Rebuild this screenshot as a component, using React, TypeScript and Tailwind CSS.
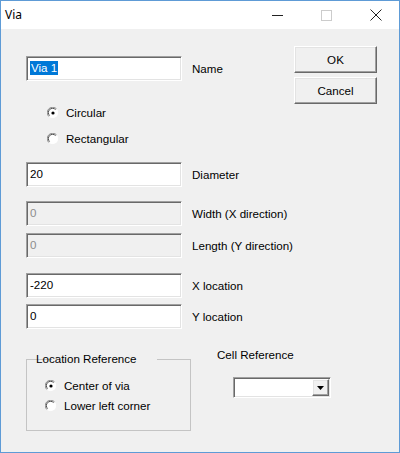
import React from 'react';

const sunken =
  'border border-t-[#a0a0a0] border-l-[#a0a0a0] border-b-white border-r-white shadow-[inset_1px_1px_0_#696969,inset_-1px_-1px_0_#e3e3e3]';
const raised =
  'border border-t-white border-l-white border-b-[#696969] border-r-[#696969] shadow-[inset_-1px_-1px_0_#a0a0a0,inset_1px_1px_0_#e3e3e3]';

const Radio: React.FC<{ checked?: boolean; label: string }> = ({ checked, label }) => (
  <div className="flex items-center gap-[7px] h-[16px]">
    <svg width="12" height="12" viewBox="0 0 12 12" className="shrink-0">
      <circle cx="6" cy="6" r="5" fill="#fff" />
      <path d="M1.8 9.5 A5 5 0 0 1 9.5 1.8" fill="none" stroke="#8a8a8a" strokeWidth="1" />
      <path d="M2.6 8.6 A4 4 0 0 1 8.6 2.6" fill="none" stroke="#505050" strokeWidth="1" />
      <path d="M9.9 2.4 A5.5 5.5 0 0 1 2.4 9.9" fill="none" stroke="#ffffff" strokeWidth="1" />
      {checked && <circle cx="6" cy="6" r="1.6" fill="#000" />}
    </svg>
    <span>{label}</span>
  </div>
);

const Field: React.FC<{ value: string; label: string; disabled?: boolean; selected?: boolean; className?: string }> = ({
  value,
  label,
  disabled,
  selected,
  className = '',
}) => (
  <div className={`flex items-center whitespace-nowrap ${className}`}>
    <div
      className={`w-[156px] h-[25px] shrink-0 flex items-start pt-[4px] pl-[3px] ${sunken} ${
        disabled ? 'bg-[#f0f0f0] text-[#8d8d8d]' : 'bg-white text-black'
      }`}
    >
      {selected ? <span className="bg-[#0078d7] text-white px-[1px]">{value}</span> : <span>{value}</span>}
    </div>
    <span className="ml-[10px]">{label}</span>
  </div>
);

export default function App() {
  return (
    <div
      className="w-[400px] h-[453px] border border-[#5e9bd6] bg-[#f0f0f0] flex flex-col text-[11.6px] leading-[14px] text-black"
      style={{ fontFamily: '"Liberation Sans", Arial, sans-serif' }}
    >
      {/* title bar */}
      <div className="h-[28px] bg-white flex items-center shrink-0">
        <span className="ml-[4px] text-[12px]" style={{ fontFamily: '"Noto Sans", sans-serif' }}>
          Via
        </span>
        <div className="ml-auto flex items-center h-full">
          <div className="w-[46px] h-full flex items-center justify-center">
            <div className="w-[11px] h-px bg-[#222]" />
          </div>
          <div className="w-[46px] h-full flex items-center justify-center ml-[3px]">
            <div className="w-[11px] h-[11px] border border-[#cccccc]" />
          </div>
          <div className="w-[46px] h-full flex items-center justify-center ml-[4px]">
            <svg width="12" height="12" viewBox="0 0 12 12">
              <path d="M0.5 0.5 L11.5 11.5 M11.5 0.5 L0.5 11.5" stroke="#222" strokeWidth="1" />
            </svg>
          </div>
        </div>
      </div>

      {/* body */}
      <div className="flex flex-1">
        <div className="flex-1 min-w-0 pl-[25px]">
          <Field value="Via 1" label="Name" selected className="mt-[27px]" />

          <div className="mt-[24px] pl-[21px] flex flex-col gap-[10px]">
            <Radio checked label="Circular" />
            <Radio label="Rectangular" />
          </div>

          <Field value="20" label="Diameter" className="mt-[15px]" />
          <Field value="0" label="Width (X direction)" disabled className="mt-[14px]" />
          <Field value="0" label="Length (Y direction)" disabled className="mt-[7px]" />
          <Field value="-220" label="X location" className="mt-[15px]" />
          <Field value="0" label="Y location" className="mt-[6px]" />

          <div className="flex items-start mt-[19px] whitespace-nowrap">
            <fieldset className="w-[165px] h-[79px] mt-[4px] border border-[#c4c4c4] pl-[18px] shrink-0">
              <legend className="ml-[7px] -translate-x-[18px] px-[2px]">Location Reference</legend>
              <div className="flex flex-col gap-[4px] mt-[12px]">
                <Radio checked label="Center of via" />
                <Radio label="Lower left corner" />
              </div>
            </fieldset>
            <div className="ml-[26px]">
              <div>Cell Reference</div>
              <div className={`ml-[16px] mt-[15px] w-[98px] h-[21px] bg-white flex justify-end ${sunken}`}>
                <div className={`w-[17px] h-[17px] mt-[1px] mr-[1px] bg-[#f0f0f0] flex items-center justify-center ${raised}`}>
                  <svg width="7" height="4" viewBox="0 0 7 4">
                    <path d="M0 0 H7 L3.5 4 Z" fill="#000" />
                  </svg>
                </div>
              </div>
            </div>
          </div>
        </div>

        <div className="w-[83px] shrink-0 mr-[22px] mt-[17px] flex flex-col gap-[4px]">
          <button className={`h-[27px] bg-[#f0f0f0] ${raised}`}>OK</button>
          <button className={`h-[27px] bg-[#f0f0f0] ${raised}`}>Cancel</button>
        </div>
      </div>
    </div>
  );
}
